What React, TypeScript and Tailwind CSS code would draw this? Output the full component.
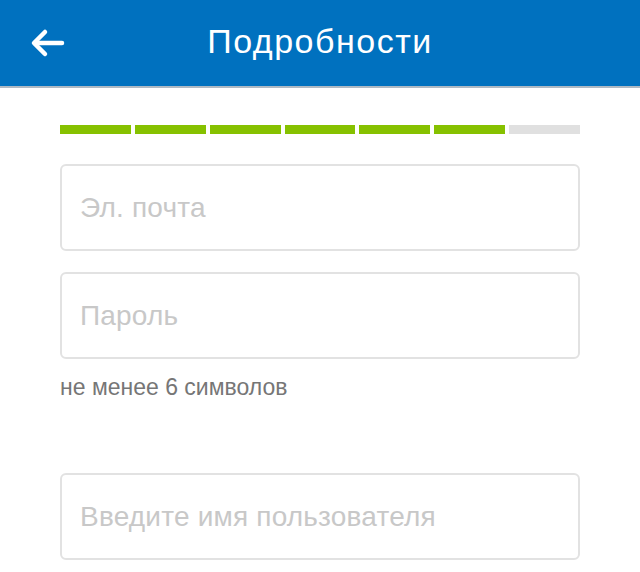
import React from "react";

const steps = [1, 1, 1, 1, 1, 1, 0];

const Field = ({ placeholder, type = "text" }: { placeholder: string; type?: string }) => (
  <input
    type={type}
    placeholder={placeholder}
    className="w-full h-[87px] rounded-[6px] border-2 border-[#e2e2e2] bg-white px-[18px] text-[28px] tracking-[0.2px] text-[#333] placeholder:text-[#c8c8c8] outline-none"
  />
);

export default function App() {
  return (
    <div className="w-[640px] h-[572px] bg-white overflow-hidden" style={{ fontFamily: '"Liberation Sans", Arial, sans-serif' }}>
      {/* Header */}
      <header className="relative h-[88px] bg-[#0071bf] border-b-2 border-[#aeb9c4] flex items-center justify-center">
        <button className="absolute left-[30px] top-[27px] p-0" aria-label="Back">
          <svg width="36" height="32" viewBox="0 0 36 32" fill="none" stroke="white" strokeWidth="4.5" strokeLinecap="round" strokeLinejoin="round">
            <path d="M32 16H5" />
            <path d="M15 5L4 16L15 27" />
          </svg>
        </button>
        <h1 className="text-white text-[34px] tracking-[1.5px] leading-none font-normal -mt-[4px]">Подробности</h1>
      </header>

      <main className="px-[60px]">
        {/* Progress */}
        <div className="flex gap-[4px] mt-[37px] h-[9px]">
          {steps.map((s, i) => (
            <div key={i} className={"flex-1 " + (s ? "bg-[#86c100]" : "bg-[#e0e0e0]")} />
          ))}
        </div>

        <div className="mt-[30px]">
          <Field placeholder="Эл. почта" type="email" />
        </div>
        <div className="mt-[21px]">
          <Field placeholder="Пароль" type="password" />
        </div>
        <p className="mt-[14px] text-[23px] leading-[28px] text-[#767676]">не менее 6 символов</p>
        <div className="mt-[72px]">
          <Field placeholder="Введите имя пользователя" />
        </div>
      </main>
    </div>
  );
}
